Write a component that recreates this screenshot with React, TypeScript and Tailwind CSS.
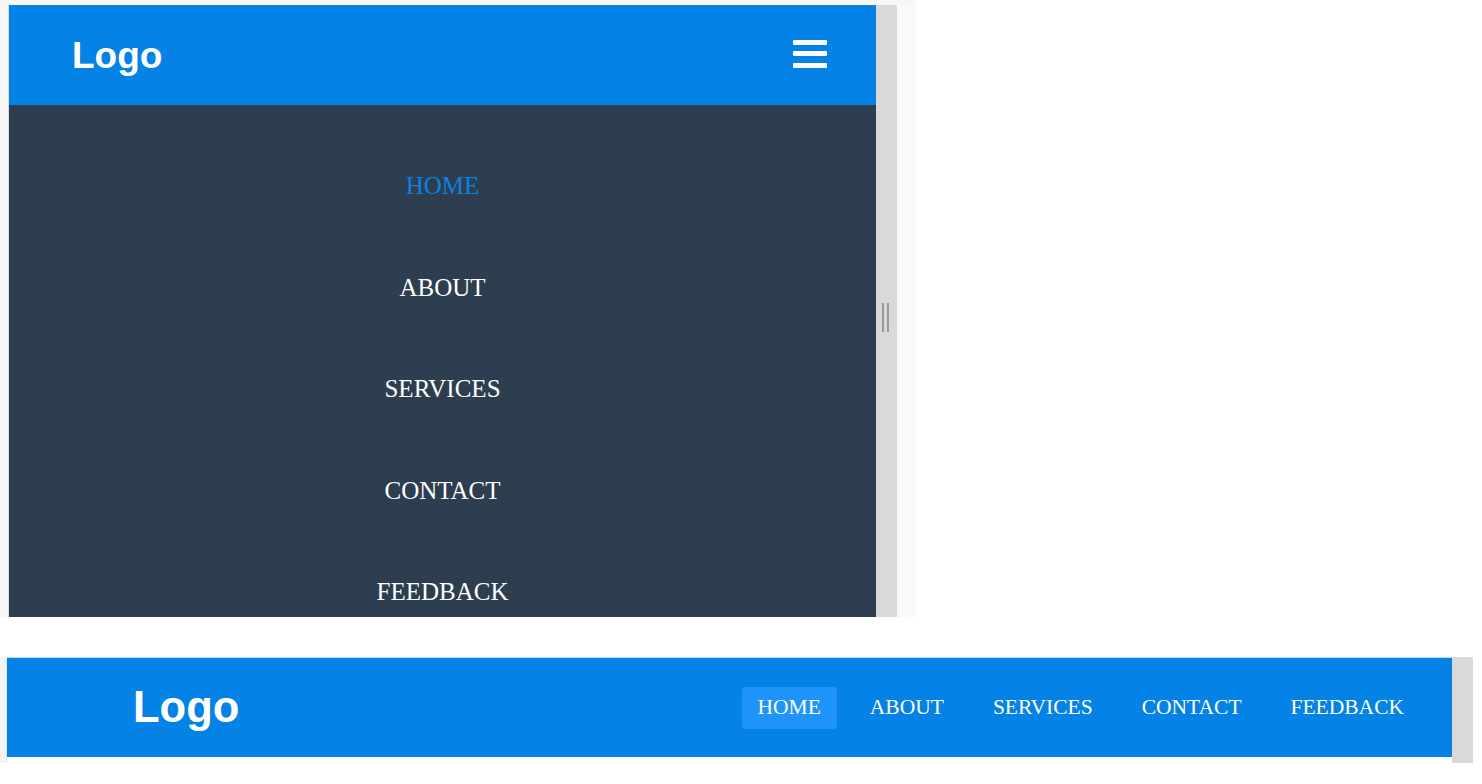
import React from 'react';

const LINKS = ['HOME', 'ABOUT', 'SERVICES', 'CONTACT', 'FEEDBACK'];

function Hamburger() {
  return (
    <div className="flex flex-col gap-[6.5px] mt-[-3px]">
      <span className="block w-[34px] h-[5px] rounded-[1px] bg-white" />
      <span className="block w-[34px] h-[5px] rounded-[1px] bg-white" />
      <span className="block w-[34px] h-[5px] rounded-[1px] bg-white" />
    </div>
  );
}

function MobilePreview() {
  return (
    <div className="flex w-[916px] h-[617px] bg-[#f7f7f7] pt-[5px] pl-[8px]">
      <div className="flex h-full">
        <div className="w-[868px] h-full border-l border-[#dcdcdc] flex flex-col overflow-hidden">
          <header className="h-[100px] shrink-0 bg-[#0482e6] flex items-center justify-between pl-[63px] pr-[49px]">
            <span className="text-white font-bold text-[37px] leading-none" style={{ fontFamily: '"Liberation Sans", Arial, sans-serif' }}>
              Logo
            </span>
            <Hamburger />
          </header>
          <ul className="flex-1 bg-[#2c3e50] pt-[30px]" style={{ fontFamily: '"Liberation Serif", "Times New Roman", serif' }}>
            {LINKS.map((l, i) => (
              <li key={l} className={`h-[101.5px] flex items-center justify-center text-[25px] ${i === 0 ? 'text-[#0a82e0]' : 'text-white'}`}>
                {l}
              </li>
            ))}
          </ul>
        </div>
        {/* resize gutter */}
        <div className="w-[21px] h-full bg-[#d9d9d9] pt-[298px] pl-[6px]">
          <div className="flex gap-[2.5px]">
            <span className="block w-[2px] h-[29px] bg-[#9a9a9a]" />
            <span className="block w-[2px] h-[29px] bg-[#9a9a9a]" />
          </div>
        </div>
      </div>
      <div className="w-[19px] h-full bg-[#fafafa]" />
    </div>
  );
}

function DesktopPreview() {
  return (
    <div className="flex w-[1473px] h-[106px]">
      <div className="w-[7px] h-full bg-[#f4f4f4] border-r border-[#e6e6e6]" />
      <div className="flex-1 flex flex-col">
        <header className="h-[100px] bg-[#0482e6] flex items-center justify-between pl-[126px] pr-[32px] border-t border-[#bfe0f7]">
          <span className="text-white font-bold text-[43.5px] leading-none" style={{ fontFamily: '"Liberation Sans", Arial, sans-serif' }}>
            Logo
          </span>
          <ul className="flex items-center gap-[17px]" style={{ fontFamily: '"Liberation Serif", "Times New Roman", serif' }}>
            {LINKS.map((l, i) => (
              <li
                key={l}
                className={`h-[42px] px-4 flex items-center rounded-[3px] text-white text-[21.5px] ${i === 0 ? 'bg-[#1e94fa]' : ''}`}
              >
                {l}
              </li>
            ))}
          </ul>
        </header>
        <div className="flex-1 bg-white" />
      </div>
      <div className="w-[21px] h-full bg-[#d9d9d9]" />
    </div>
  );
}

export default function App() {
  return (
    <div className="w-[1482px] h-[784px] bg-white overflow-hidden">
      <MobilePreview />
      <div className="h-[40px]" />
      <DesktopPreview />
    </div>
  );
}
